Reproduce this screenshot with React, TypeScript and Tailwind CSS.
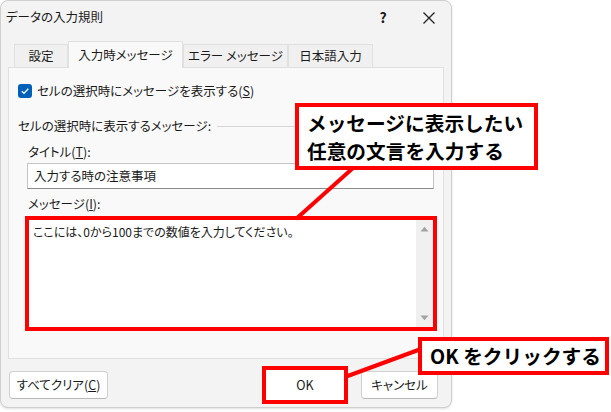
import React from 'react';

const font = "font-['Yu_Gothic_UI','Noto_Sans_CJK_JP',sans-serif] [font-feature-settings:'palt']";

function Tab({ label, width, active }: { label: string; width: string; active?: boolean }) {
  return (
    <div
      className={`${width} flex items-center justify-center border border-b-0 border-[#e0e0e0] text-[12.5px] text-[#1a1a1a] ${
        active ? 'relative z-10 -mb-px h-[27px] bg-[#f9f9f9]' : 'h-[23px] bg-[#f0f0f0]'
      }`}
    >
      {label}
    </div>
  );
}

function Button({ children, className = '' }: { children: React.ReactNode; className?: string }) {
  return (
    <div
      className={`flex h-[28px] items-center justify-center rounded-[4px] border border-[#d0d0d0] border-b-[#b8b8b8] bg-white text-[12.5px] text-[#1a1a1a] ${className}`}
    >
      {children}
    </div>
  );
}

export default function App() {
  return (
    <div className={`relative h-[412px] w-[611px] overflow-hidden bg-white ${font}`}>
      <div className="flex h-[408px] w-[452px] flex-col rounded-[8px] border border-[#cfcfcf] bg-[#f3f3f3] shadow-sm">
        {/* title bar */}
        <div className="flex h-[33px] items-center pl-[5px] text-[12.5px] text-[#1a1a1a]">
          <span>データの入力規則</span>
          <span className="ml-auto w-[20px] text-center text-[14px] font-semibold">?</span>
          <svg className="ml-[29px] mr-[15px]" width="14" height="14" viewBox="0 0 14 14">
            <path d="M1.5 1.5L12.5 12.5M12.5 1.5L1.5 12.5" stroke="#222" strokeWidth="1.3" />
          </svg>
        </div>

        {/* tabs */}
        <div className="mt-[6px] flex h-[27px] items-end pl-[13px]">
          <Tab label="設定" width="w-[54px]" />
          <Tab label="入力時メッセージ" width="w-[115px]" active />
          <Tab label="エラー メッセージ" width="w-[105px]" />
          <Tab label="日本語入力" width="w-[85px]" />
        </div>

        {/* panel */}
        <div className="ml-[7px] flex h-[292px] w-[436px] flex-col border border-[#e0e0e0] bg-[#f9f9f9] pl-[9px] text-[12.5px] text-[#1a1a1a]">
          <div className="mt-[13px] flex h-[20px] items-center gap-[5px]">
            <div className="flex h-[14px] w-[14px] items-center justify-center rounded-[3px] bg-[#005fb8]">
              <svg width="10" height="10" viewBox="0 0 10 10">
                <path d="M1.8 5.2L4 7.3L8.3 2.8" stroke="white" strokeWidth="1.3" fill="none" />
              </svg>
            </div>
            <span>
              セルの選択時にメッセージを表示する(<span className="underline">S</span>)
            </span>
          </div>

          <div className="mt-[16px] flex h-[18px] items-center">
            <span>セルの選択時に表示するメッセージ:</span>
            <div className="ml-[6px] mr-[6px] h-px flex-1 bg-[#d6d6d6]" />
          </div>

          <div className="ml-[10px] mt-[8px] flex h-[18px] items-center">
            タイトル(<span className="underline">T</span>):
          </div>
          <div className="ml-[9px] mt-[2px] flex h-[26px] w-[407px] items-center border border-[#c4c4c4] border-b-[#8a8a8a] bg-white pl-[6px]">
            入力する時の注意事項
          </div>

          <div className="ml-[10px] mt-[6px] flex h-[18px] items-center">
            メッセージ(<span className="underline">I</span>):
          </div>
          <div className="ml-[11px] mt-[7px] flex h-[107px] w-[404px] bg-white outline-4 outline-[#ff0000]">
            <div className="flex-1 pl-[4px] pt-[3px] text-[12px]">ここには、0から100までの数値を入力してください。</div>
            <div className="flex w-[17px] flex-col items-center justify-between bg-[#f0f0f0] py-[6px]">
              <svg width="9" height="6" viewBox="0 0 9 6">
                <path d="M0.5 5.5L4.5 0.8L8.5 5.5Z" fill="#a3a3a3" />
              </svg>
              <svg width="9" height="6" viewBox="0 0 9 6">
                <path d="M0.5 0.5L4.5 5.2L8.5 0.5Z" fill="#a3a3a3" />
              </svg>
            </div>
          </div>
        </div>

        {/* buttons */}
        <div className="mt-[11px] flex items-center pl-[8px]">
          <Button className="w-[99px]">
            すべてクリア(<span className="underline">C</span>)
          </Button>
          <Button className="ml-[158px] h-[30px] w-[78px] rounded-none border-0 outline-4 outline-[#ff0000]">
            OK
          </Button>
          <Button className="ml-[17px] w-[77px]">キャンセル</Button>
        </div>
      </div>

      {/* annotation leader lines */}
      <svg className="pointer-events-none absolute left-0 top-0" width="611" height="412">
        <line x1="353" y1="168" x2="296" y2="219" stroke="#ff0000" strokeWidth="4" />
        <line x1="421" y1="349" x2="345" y2="377" stroke="#ff0000" strokeWidth="4" />
      </svg>

      {/* callouts */}
      <div className="absolute left-[295px] top-[103px] flex h-[67px] w-[243px] flex-col justify-center border-4 border-[#ff0000] bg-white pl-[8px] text-[19.7px] font-bold leading-[28px] text-black [font-feature-settings:normal]">
        <div>メッセージに表示したい</div>
        <div>任意の文言を入力する</div>
      </div>
      <div className="absolute left-[418px] top-[337px] flex h-[38px] w-[191px] items-center border-4 border-[#ff0000] bg-white pl-[8px] text-[19.7px] font-bold text-black [font-feature-settings:normal]">
        OK をクリックする
      </div>
    </div>
  );
}
